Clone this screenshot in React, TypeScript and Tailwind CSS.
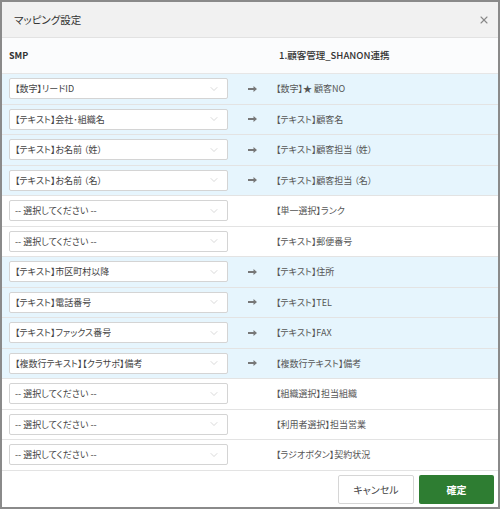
import { ChevronDown, X } from "lucide-react";

type Row = { left: string | null; right: string };

const rows: Row[] = [
  { left: "【数字】リードID", right: "【数字】★ 顧客NO" },
  { left: "【テキスト】会社･組織名", right: "【テキスト】顧客名" },
  { left: "【テキスト】お名前 （姓）", right: "【テキスト】顧客担当 （姓）" },
  { left: "【テキスト】お名前 （名）", right: "【テキスト】顧客担当 （名）" },
  { left: null, right: "【単一選択】ランク" },
  { left: null, right: "【テキスト】郵便番号" },
  { left: "【テキスト】市区町村以降", right: "【テキスト】住所" },
  { left: "【テキスト】電話番号", right: "【テキスト】TEL" },
  { left: "【テキスト】ファックス番号", right: "【テキスト】FAX" },
  { left: "【複数行テキスト】【クラサポ】備考", right: "【複数行テキスト】備考" },
  { left: null, right: "【組織選択】担当組織" },
  { left: null, right: "【利用者選択】担当営業" },
  { left: null, right: "【ラジオボタン】契約状況" },
];

function Arrow() {
  return (
    <svg width="9" height="6" viewBox="0 0 9 6" className="text-[#777]">
      <path d="M0 2h5.5V0L9 3 5.5 6V4H0z" fill="currentColor" />
    </svg>
  );
}

export default function App() {
  return (
    <div
      className="w-[500px] h-[509px] border-2 border-[#8a8a8a] bg-white flex flex-col text-[#333] [font-feature-settings:'palt']"
      style={{ fontFamily: '"Noto Sans CJK JP", "Noto Sans", sans-serif' }}
    >
      {/* Header */}
      <div className="h-[36px] shrink-0 bg-[#f1f1f1] border-b border-[#e2e2e2] flex items-center justify-between pl-[12px] pr-[8px]">
        <span className="text-[10.5px] text-[#333]">マッピング設定</span>
        <X className="h-[12px] w-[12px] text-[#888]" strokeWidth={2.2} />
      </div>

      {/* Column header */}
      <div className="h-[36px] shrink-0 flex items-center text-[9px] font-bold border-b border-[#e6e6e6] bg-[#fbfcfd]">
        <span className="pl-[7px] w-[277px]">SMP</span>
        <span className="font-medium text-[9.5px]">1.顧客管理_SHANON連携</span>
      </div>

      {/* Rows */}
      <div className="flex flex-col">
        {rows.map((r, i) => (
          <div
            key={i}
            className={
              "h-[30.5px] flex items-center border-b border-[#e3e3e3] pl-[7px] " +
              (r.left ? "bg-[#e6f5fd]" : "bg-white")
            }
          >
            <div className="w-[219px] h-[21px] bg-white border border-[#d4d4d4] rounded-[2px] flex items-center justify-between pl-[5px] pr-[7px]">
              <span className="text-[9px] text-[#444] truncate">
                {r.left ?? "-- 選択してください --"}
              </span>
              <ChevronDown className="h-[12px] w-[12px] text-[#c4c4c4]" strokeWidth={1.3} />
            </div>
            <div className="w-[48px] flex justify-center">{r.left && <Arrow />}</div>
            <span className="text-[9px] text-[#555]">{r.right}</span>
          </div>
        ))}
      </div>

      {/* Footer */}
      <div className="flex-1 flex items-center justify-end gap-[5px] pr-[4px] pt-[1px]">
        <button className="w-[76px] h-[29px] border border-[#d6d6d6] bg-white text-[10px] text-[#444] rounded-[2px]">
          キャンセル
        </button>
        <button className="w-[75px] h-[29px] bg-[#2e7d32] text-white text-[10px] font-bold rounded-[2px]">
          確定
        </button>
      </div>
    </div>
  );
}
